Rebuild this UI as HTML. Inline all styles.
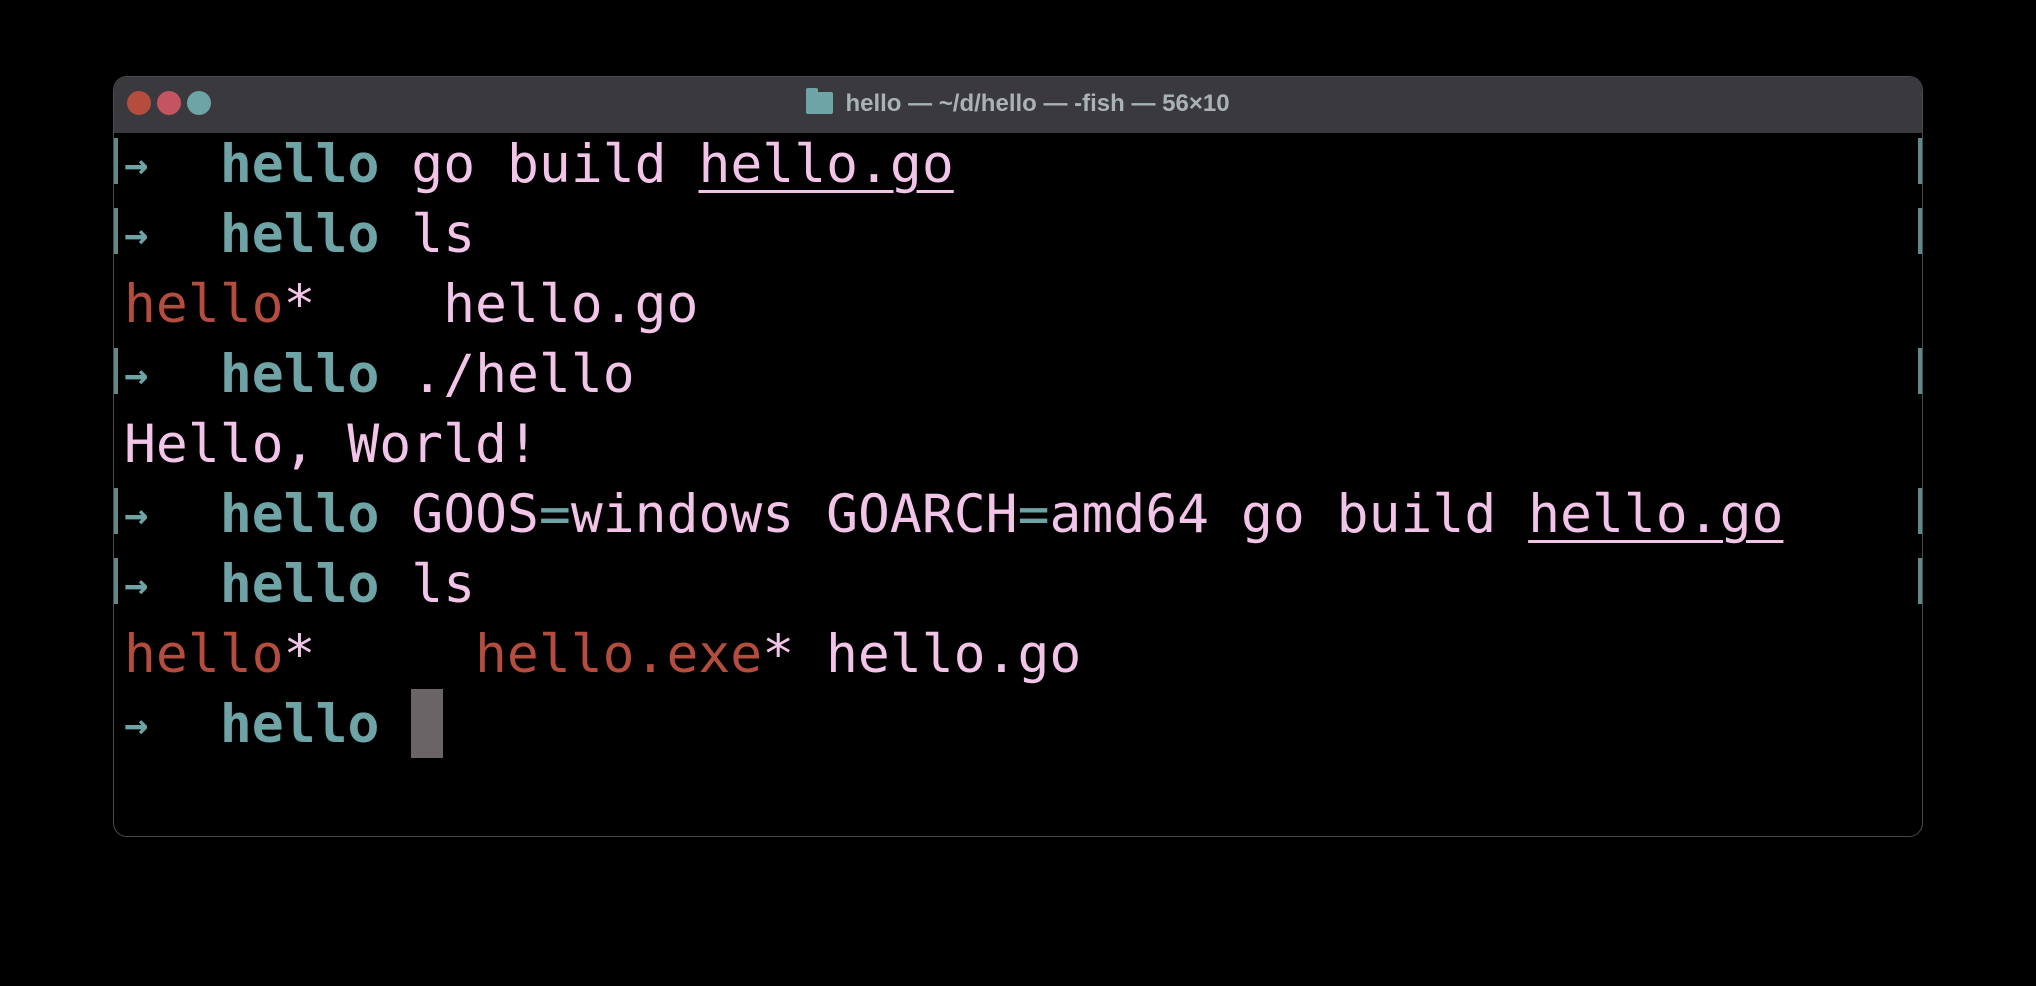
<!DOCTYPE html>
<html><head><meta charset="utf-8"><style>
html,body{margin:0;padding:0;background:#000;width:2036px;height:986px;overflow:hidden}
.win{position:absolute;left:113px;top:76px;width:1810px;height:761px;background:#000;border:1px solid #4a494f;border-radius:14px;overflow:hidden;box-sizing:border-box}
.tb{position:absolute;left:0;top:0;right:0;height:56px;background:#3a393e}
.dot{position:absolute;top:14px;width:24px;height:24px;border-radius:50%}
.title{position:absolute;left:0;right:0;top:13px;text-align:center;font:bold 24px "Liberation Sans",sans-serif;color:#a9b3b5}
.folder{display:inline-block;width:27px;height:22px;background:#6fa4a6;border-radius:2px;vertical-align:-3px;margin-right:12px;position:relative}
.folder:before{content:"";position:absolute;left:0;top:-4px;width:12px;height:5px;background:#6fa4a6;border-radius:2px 2px 0 0}
.l{position:absolute;left:10px;height:70px;font-family:"DejaVu Sans Mono",monospace;font-size:53px;line-height:70px;white-space:pre;color:#f1c4e8}
.t{color:#6fa4a6}.r{color:#b44d3e}.u{text-decoration:underline;text-decoration-thickness:3px;text-underline-offset:8px}
.b{font-weight:bold}
.arr{color:#6fa4a6;font-weight:bold;display:inline-block;width:32px;font-size:40px;vertical-align:top}
.mk{position:absolute;width:4px;height:46px;background:#5e8a8c}
.cur{position:absolute;left:297px;top:612px;width:32px;height:69px;background:#6a6466}
</style></head><body>
<div class="win">
<div class="tb">
<div class="dot" style="left:13px;background:#b44d3e"></div>
<div class="dot" style="left:43px;background:#c45560"></div>
<div class="dot" style="left:73px;background:#6fa4a6"></div>
<div class="title"><span class="folder"></span>hello — ~/d/hello — -fish — 56×10</div>
</div>
<div class="mk" style="left:0;top:61px"></div><div class="mk" style="right:0;top:61px"></div>
<div class="mk" style="left:0;top:131px"></div><div class="mk" style="right:0;top:131px"></div>
<div class="mk" style="left:0;top:271px"></div><div class="mk" style="right:0;top:271px"></div>
<div class="mk" style="left:0;top:411px"></div><div class="mk" style="right:0;top:411px"></div>
<div class="mk" style="left:0;top:481px"></div><div class="mk" style="right:0;top:481px"></div>
<div class="cur"></div>
<div class="l" style="top:53px"><span class="arr">→</span>  <span class="t b">hello</span> go build <span class="u">hello.go</span></div>
<div class="l" style="top:123px"><span class="arr">→</span>  <span class="t b">hello</span> ls</div>
<div class="l" style="top:193px"><span class="r">hello</span>*    hello.go</div>
<div class="l" style="top:263px"><span class="arr">→</span>  <span class="t b">hello</span> ./hello</div>
<div class="l" style="top:333px">Hello, World!</div>
<div class="l" style="top:403px"><span class="arr">→</span>  <span class="t b">hello</span> GOOS<span class="t">=</span>windows GOARCH<span class="t">=</span>amd64 go build <span class="u">hello.go</span></div>
<div class="l" style="top:473px"><span class="arr">→</span>  <span class="t b">hello</span> ls</div>
<div class="l" style="top:543px"><span class="r">hello</span>*     <span class="r">hello.exe</span>* hello.go</div>
<div class="l" style="top:613px"><span class="arr">→</span>  <span class="t b">hello</span> </div>
</div>
</body></html>
